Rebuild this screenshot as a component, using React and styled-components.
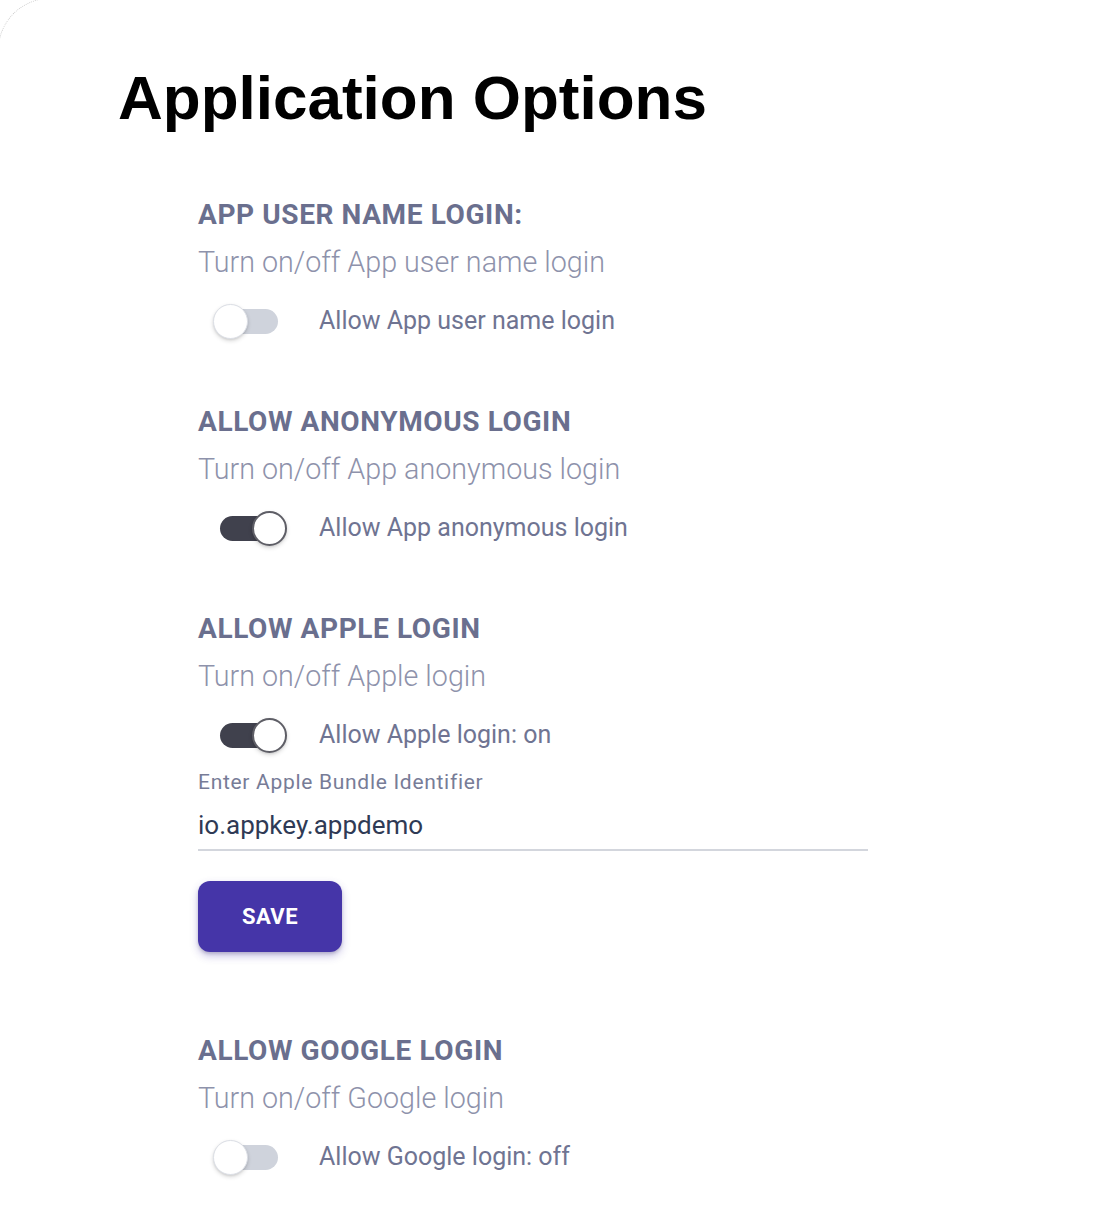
import React, { useState } from "react";
import styled, { createGlobalStyle } from "styled-components";

const Global = createGlobalStyle`
  html, body { margin: 0; padding: 0; background: #ffffff; }
  body { font-family: Roboto, "Liberation Sans", sans-serif; }
  * { box-sizing: border-box; }
`;

const Page = styled.div`
  position: relative;
  width: 1110px;
  min-height: 1222px;
  padding: 67px 0 0 118px;
  overflow: hidden;
`;

const CornerArc = styled.div`
  position: absolute;
  left: -2px;
  top: -2px;
  width: 200px;
  height: 200px;
  border-top: 1px dotted #cfcfcf;
  border-left: 1px dotted #cfcfcf;
  border-top-left-radius: 52px;
  pointer-events: none;
`;

const Title = styled.h1`
  margin: 0;
  font-family: "Liberation Sans", Arial, sans-serif;
  font-weight: 700;
  font-size: 62px;
  line-height: 62px;
  color: #000;
`;

const Content = styled.div`
  display: flex;
  flex-direction: column;
  padding: 70px 0 0 80px;
`;

const Section = styled.section`
  display: flex;
  flex-direction: column;
  margin-bottom: ${(p) => p.$gap || 63}px;
`;

const Heading = styled.h2`
  margin: 0;
  font-size: 28px;
  line-height: 32px;
  font-weight: 700;
  letter-spacing: 0.6px;
  color: #6a6f8e;
  text-transform: uppercase;
`;

const Subtitle = styled.p`
  margin: 13px 0 0;
  font-size: 28.7px;
  line-height: 36px;
  font-weight: 300;
  color: #8e92ab;
`;

const ToggleRow = styled.label`
  display: flex;
  align-items: center;
  height: 44px;
  margin-top: 19px;
  padding-left: 22px;
  cursor: pointer;
`;

const Track = styled.span`
  position: relative;
  flex: none;
  width: 58px;
  height: 25px;
  border-radius: 13px;
  background: ${(p) => (p.$on ? "#40414d" : "#cfd3dc")};
`;

const Thumb = styled.span`
  position: absolute;
  top: 50%;
  left: ${(p) => (p.$on ? "32px" : "-7px")};
  width: 35px;
  height: 35px;
  margin-top: -17.5px;
  border-radius: 50%;
  background: #fff;
  border: ${(p) => (p.$on ? "2px solid #5e5e66" : "1px solid #dcdfe6")};
  box-shadow: 0 2px 4px rgba(0, 0, 0, 0.14), 0 1px 2px rgba(0, 0, 0, 0.08);
`;

const ToggleLabel = styled.span`
  margin-left: 41px;
  font-size: 25px;
  line-height: 30px;
  font-weight: 400;
  color: #6f7492;
`;

const FieldLabel = styled.div`
  margin-top: 13px;
  font-size: 21px;
  line-height: 24px;
  letter-spacing: 0.7px;
  color: #777c97;
`;

const InputValue = styled.div`
  width: 670px;
  margin-top: 8px;
  padding: 7px 0 8px;
  font-size: 26px;
  line-height: 32px;
  color: #2f3a55;
  border-bottom: 2px solid #d3d6dd;
`;

const SaveButton = styled.button`
  align-self: flex-start;
  margin-top: 30px;
  width: 144px;
  height: 71px;
  border: none;
  border-radius: 12px;
  background: #4535a8;
  color: #fff;
  font-family: Roboto, "Liberation Sans", sans-serif;
  font-size: 22px;
  font-weight: 700;
  letter-spacing: 0.5px;
  box-shadow: 0 4px 8px rgba(69, 53, 168, 0.3), 0 2px 3px rgba(0, 0, 0, 0.15);
  cursor: pointer;
`;

function Toggle({ on, label }) {
  return (
    <ToggleRow>
      <Track $on={on}>
        <Thumb $on={on} />
      </Track>
      <ToggleLabel>{label}</ToggleLabel>
    </ToggleRow>
  );
}

export default function App() {
  const [bundle] = useState("io.appkey.appdemo");
  return (
    <Page>
      <Global />
      <CornerArc />
      <Title>Application Options</Title>
      <Content>
        <Section>
          <Heading>App user name login:</Heading>
          <Subtitle>Turn on/off App user name login</Subtitle>
          <Toggle on={false} label="Allow App user name login" />
        </Section>
        <Section>
          <Heading>Allow anonymous login</Heading>
          <Subtitle>Turn on/off App anonymous login</Subtitle>
          <Toggle on={true} label="Allow App anonymous login" />
        </Section>
        <Section $gap={83}>
          <Heading>Allow Apple login</Heading>
          <Subtitle>Turn on/off Apple login</Subtitle>
          <Toggle on={true} label="Allow Apple login: on" />
          <FieldLabel>Enter Apple Bundle Identifier</FieldLabel>
          <InputValue>{bundle}</InputValue>
          <SaveButton>SAVE</SaveButton>
        </Section>
        <Section>
          <Heading>Allow Google login</Heading>
          <Subtitle>Turn on/off Google login</Subtitle>
          <Toggle on={false} label="Allow Google login: off" />
        </Section>
      </Content>
    </Page>
  );
}
